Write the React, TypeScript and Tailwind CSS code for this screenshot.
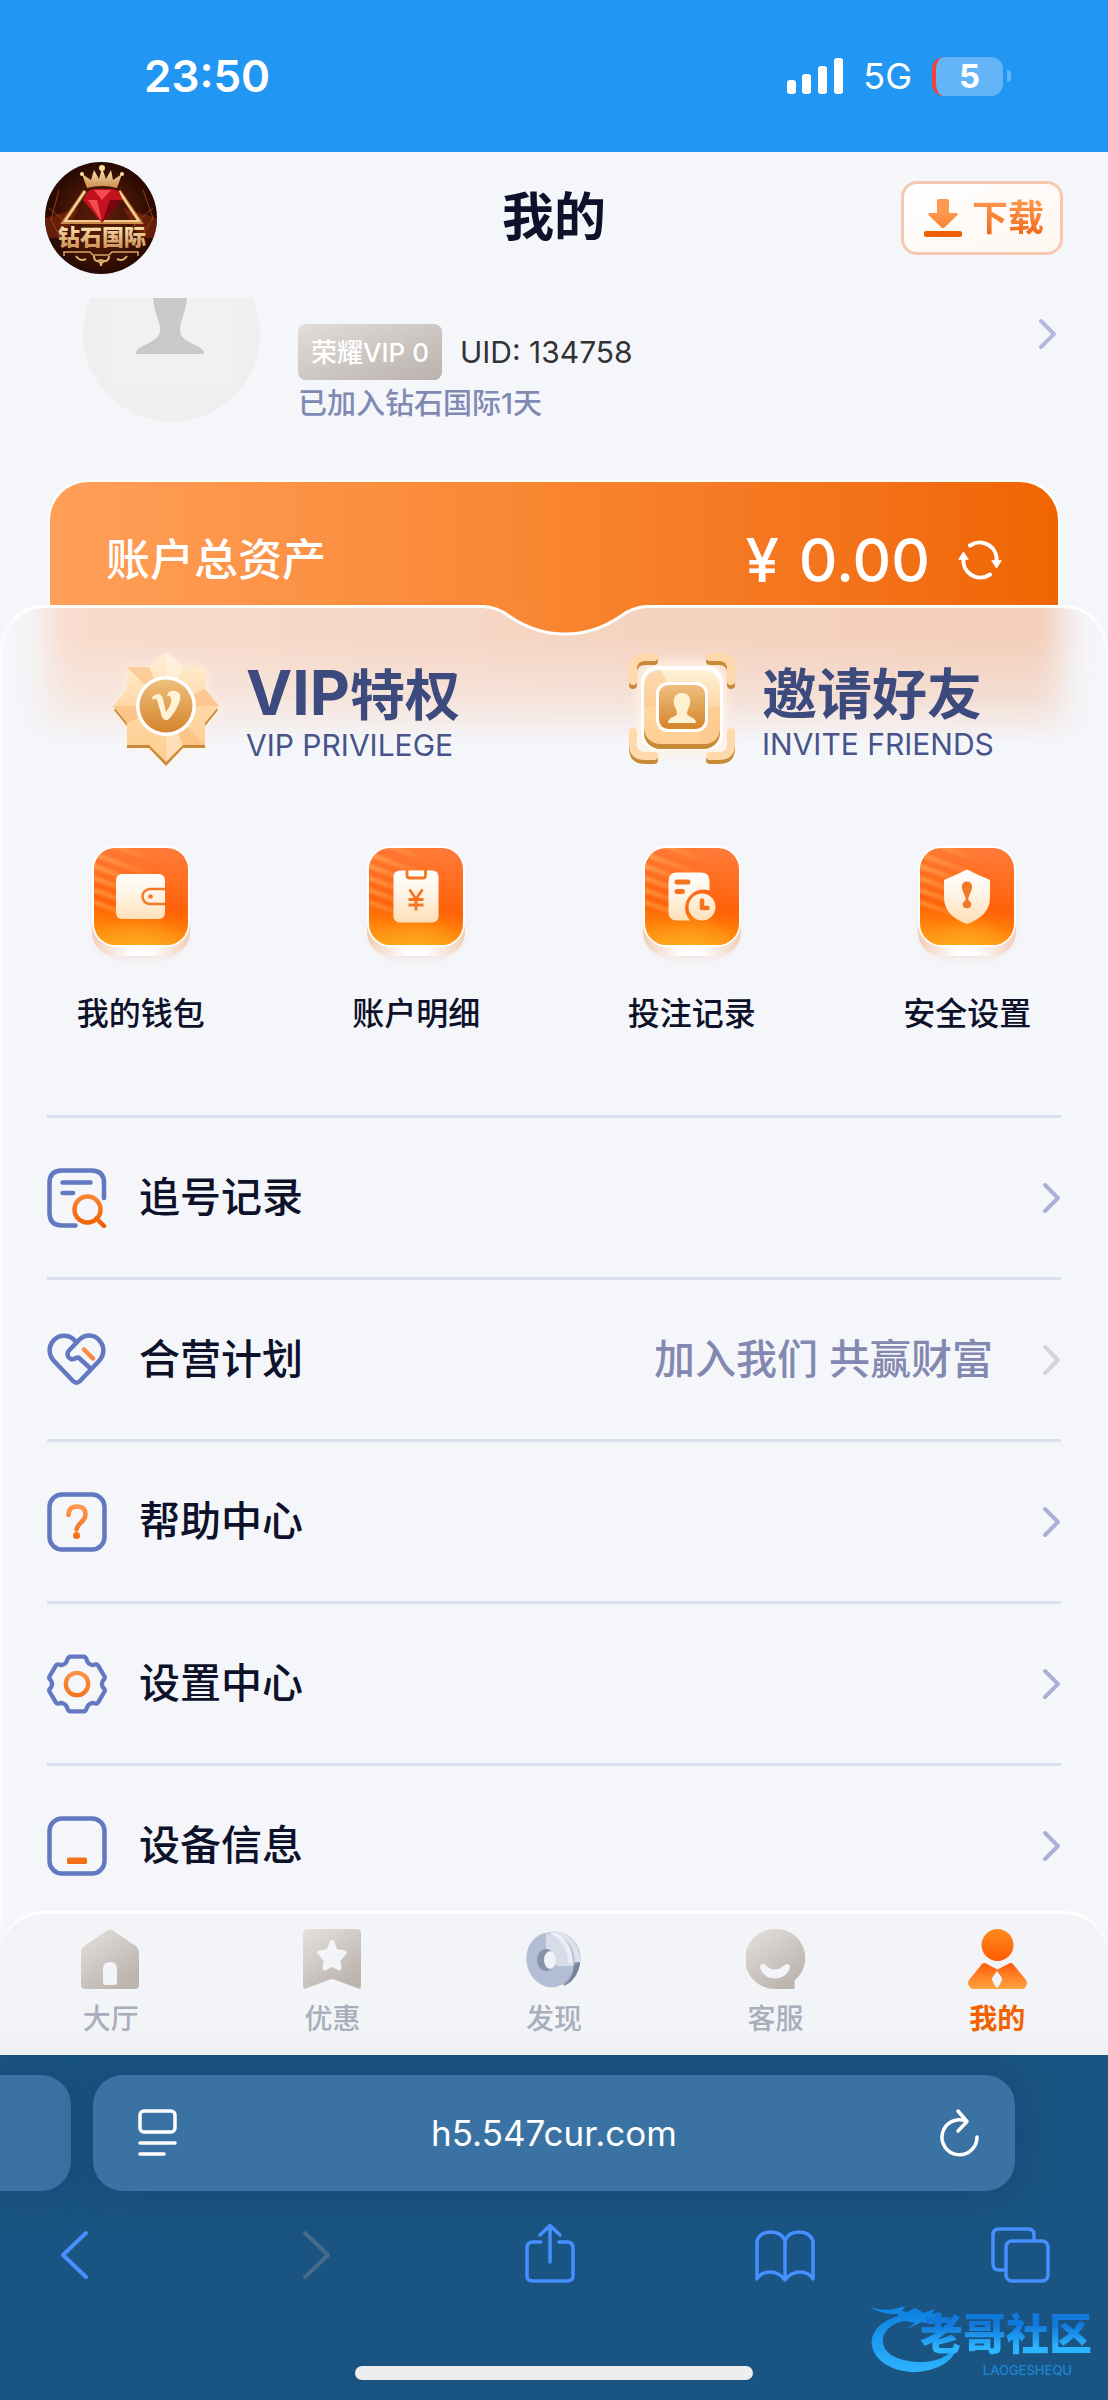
import React from 'react';

interface QuickAction {
    id: string;
    label: string;
    glyph: React.ReactNode;
}

interface MenuItem {
    id: string;
    label: string;
    note?: string;
    icon: React.ReactNode;
}

interface TabItem {
    id: string;
    label: string;
    icon: React.ReactNode;
}

// Gradients shared by all the icons on the page
const SharedGradients: React.FC = () => (
    <svg className="absolute w-0 h-0" aria-hidden="true">
        <defs>
            <linearGradient id="tile" x1="0.6" y1="0" x2="0.5" y2="1">
                <stop offset="0" stopColor="#ff7a38" />
                <stop offset="0.62" stopColor="#ff6208" />
                <stop offset="0.78" stopColor="#ff7a08" />
                <stop offset="1" stopColor="#ff9f18" />
            </linearGradient>
            <radialGradient id="tileGlow" cx="0.5" cy="1" r="0.5" gradientTransform="matrix(1 0 0 0.6 0 0.4)">
                <stop offset="0" stopColor="#ffa91e" />
                <stop offset="1" stopColor="#ff9f18" stopOpacity="0" />
            </radialGradient>
            <linearGradient id="tileShine" gradientUnits="userSpaceOnUse" x1="13" y1="30" x2="75" y2="40">
                <stop offset="0" stopColor="#ffc06a" stopOpacity="0.5" />
                <stop offset="1" stopColor="#ffc06a" stopOpacity="0" />
            </linearGradient>
            <linearGradient id="tileBase" x1="0" y1="0" x2="1" y2="0">
                <stop offset="0" stopColor="#f0cdb8" />
                <stop offset="0.4" stopColor="#fff" />
                <stop offset="0.6" stopColor="#fff" />
                <stop offset="1" stopColor="#f0cdb8" />
            </linearGradient>
            <linearGradient id="cream" gradientUnits="userSpaceOnUse" x1="0" y1="32" x2="0" y2="84">
                <stop offset="0" stopColor="#fff" />
                <stop offset="0.4" stopColor="#fff6ea" />
                <stop offset="1" stopColor="#fddfb6" />
            </linearGradient>
            <linearGradient id="hot" gradientUnits="userSpaceOnUse" x1="0" y1="12" x2="0" y2="58">
                <stop offset="0" stopColor="#ff9a52" />
                <stop offset="1" stopColor="#ee6000" />
            </linearGradient>
            <linearGradient id="stone" x1="0.1" y1="0" x2="0.8" y2="1">
                <stop offset="0" stopColor="#e2dfdb" />
                <stop offset="0.9" stopColor="#bcb5b0" />
            </linearGradient>
            <linearGradient id="head" x1="0" y1="0" x2="0" y2="1">
                <stop offset="0" stopColor="#ff8c1f" />
                <stop offset="1" stopColor="#ff5c00" />
            </linearGradient>
            <linearGradient id="body" x1="0" y1="0" x2="0" y2="1">
                <stop offset="0" stopColor="#ff5c08" />
                <stop offset="1" stopColor="#ffa540" />
            </linearGradient>
            <linearGradient id="gold" x1="0" y1="0" x2="0" y2="1">
                <stop offset="0" stopColor="#fff1d8" />
                <stop offset="0.5" stopColor="#ffd7a4" />
                <stop offset="1" stopColor="#ffce92" />
            </linearGradient>
            <linearGradient id="goldDark" x1="0" y1="0" x2="0" y2="1">
                <stop offset="0" stopColor="#eebf7e" />
                <stop offset="1" stopColor="#d5842a" />
            </linearGradient>
            <linearGradient id="mark" x1="0" y1="0" x2="0" y2="1">
                <stop offset="0" stopColor="#0f7fe0" />
                <stop offset="1" stopColor="#2cb4ff" />
            </linearGradient>
            <filter id="soft" x="-40%" y="-40%" width="180%" height="180%">
                <feGaussianBlur stdDeviation="5" />
            </filter>
            <filter id="haze" x="-20%" y="-20%" width="140%" height="140%">
                <feGaussianBlur stdDeviation="1.2" />
            </filter>
            <clipPath id="tileClip">
                <rect x="13" y="10" width="94" height="97" rx="21" />
            </clipPath>
        </defs>
    </svg>
);

const BrandLogo: React.FC = () => (
    <svg className="w-28 h-28 shrink-0" viewBox="0 0 112 112" role="img" aria-label="钻石国际">
        <defs>
            <radialGradient id="logoBg">
                <stop offset="0" stopColor="#5a1c08" />
                <stop offset="0.6" stopColor="#451405" />
                <stop offset="1" stopColor="#260a03" />
            </radialGradient>
            <linearGradient id="logoGold" x1="0" y1="0" x2="0" y2="1">
                <stop offset="0" stopColor="#ffeab8" />
                <stop offset="1" stopColor="#c98a4c" />
            </linearGradient>
            <clipPath id="logoClip"><circle cx="56" cy="56" r="56" /></clipPath>
        </defs>
        <g clipPath="url(#logoClip)">
            <rect width="112" height="112" fill="url(#logoBg)" />
            <path d="M0 56l34-10-18 30H0zM112 56L78 46l18 30h16z" fill="#7a260b" opacity="0.75" />
            <path d="M14 28l-8 30 14 26M98 28l10 28-16 26M4 46l24 20M108 46L86 66" stroke="#a6491c" strokeWidth="1" fill="none" opacity="0.8" />
            <path d="M40 29L19 60h76L74 29" fill="none" stroke="#c98a4c" strokeWidth="4" />
            <path d="M40 29L20 59h74L74 29" fill="none" stroke="#ffe0a8" strokeWidth="1.5" />
            <path d="M43 29l6-2h18l7 2 3 8-20 24-19-23z" fill="#c3121f" />
            <path d="M49 28l8 10 9-10zM43 38l14 22-5-22z" fill="#ff5a5a" opacity="0.8" />
            <path d="M57 60l8-22h12z" fill="#7a0510" />
            <path d="M42 26l-5-14 9 6 3-10 5 9 3-11 4 11 5-9 2 10 9-6-5 14q-15-4-30 0z" fill="url(#logoGold)" />
            <circle cx="57" cy="6" r="3" fill="#ffdf9c" />
            <circle cx="37" cy="12" r="2" fill="#ffdf9c" />
            <circle cx="77" cy="12" r="2" fill="#ffdf9c" />
            <text x="57" y="83" textAnchor="middle" fontSize="22" fontWeight="900" fill="url(#logoGold)">钻石国际</text>
            <path d="M19 94v-4h26l3 3h16l3-3h26v4" fill="none" stroke="#d9a566" strokeWidth="1.5" />
            <path d="M31 94q4 6 10 3M82 94q-4 6-10 3M49 94q0 7 7 4 8 3 8-4M52 99q4 0 4 5 0-5 5-5" fill="none" stroke="#e0b070" strokeWidth="2" />
        </g>
    </svg>
);

const ChevronRight: React.FC<{ className?: string }> = ({ className = 'text-[#aab0d6]' }) => (
    <svg className={`w-5 h-8 shrink-0 ${className}`} viewBox="0 0 20 32" fill="none" stroke="currentColor" strokeWidth="4" strokeLinecap="round" strokeLinejoin="round">
        <path d="M4 3l13 13L4 29" />
    </svg>
);

const TileIcon: React.FC<{ children: React.ReactNode }> = ({ children }) => (
    <svg className="w-[120px] h-[130px]" viewBox="0 0 120 130">
        <rect x="15" y="24" width="90" height="94" rx="24" fill="#e8b79a" opacity="0.45" filter="url(#soft)" />
        <rect x="11" y="22" width="98" height="96" rx="24" fill="url(#tileBase)" />
        <rect x="11" y="8" width="98" height="101" rx="24" fill="#fff" />
        <rect x="13" y="10" width="94" height="97" rx="21" fill="url(#tile)" />
        <rect x="13" y="10" width="94" height="97" rx="21" fill="url(#tileGlow)" />
        <g clipPath="url(#tileClip)">
            <path d="M13 16l70 26M13 28l70 26M13 40l70 26M13 52l60 22M28 6l60 22M13 64l50 18" stroke="url(#tileShine)" strokeWidth="5" filter="url(#haze)" />
        </g>
        {children}
    </svg>
);

const quickActions: QuickAction[] = [
    {
        id: 'wallet',
        label: '我的钱包',
        glyph: (
            <>
                <rect x="35" y="36" width="49" height="45" rx="6" fill="url(#cream)" />
                <path d="M84 51H69a7.500 7.500 0 000 15h15" fill="none" stroke="#f27a2a" strokeWidth="2.500" />
                <circle cx="69.500" cy="58.500" r="2.300" fill="#f27a2a" />
            </>
        ),
    },
    {
        id: 'detail',
        label: '账户明细',
        glyph: (
            <>
                <rect x="37.500" y="32.500" width="45" height="52" rx="6" fill="url(#cream)" />
                <path d="M51 32v5.500q0 2.500 2.500 2.500h13.500q2.500 0 2.500-2.500V32" fill="none" stroke="#f5741f" strokeWidth="2.800" />
                <path d="M53.500 51.500l6.500 9.500 6.500-9.500M60 61v11.500M52.500 61.500h15M52.500 67h15" fill="none" stroke="#f5741f" strokeWidth="2.800" />
            </>
        ),
    },
    {
        id: 'bets',
        label: '投注记录',
        glyph: (
            <>
                <path d="M45 34.500h24q8.500 0 8.500 8.500v9.500A18.500 18.500 0 0058 82.500H45q-8.500 0-8.500-8.500V43q0-8.500 8.500-8.500z" fill="url(#cream)" />
                <path d="M45 44h11M45 53.500h5.500" stroke="#f5741f" strokeWidth="5" strokeLinecap="round" />
                <circle cx="70" cy="69" r="13.500" fill="url(#cream)" />
                <path d="M70 62.500v7.500h5.500" fill="none" stroke="#f5741f" strokeWidth="4.500" strokeLinecap="round" strokeLinejoin="round" />
            </>
        ),
    },
    {
        id: 'security',
        label: '安全设置',
        glyph: (
            <>
                <path d="M60 31.500q12 6 23 10.500v17q0 19-23 27-23-8-23-27V42q11-4.500 23-10.500z" fill="url(#cream)" />
                <path d="M60 43.500c4 0 5.500 3 5 6.500-1 6-4 7-3.500 12.500 3 1.500 3 4 2.500 5.500-1 3-7 3-8 0-.5-1.500-.5-4 2.500-5.500C59 57 56 56 55 50c-.5-3.500 1-6.500 5-6.500z" fill="#f07a28" />
            </>
        ),
    },
];

const iconBox = 'w-[60px] h-[60px] shrink-0';

const menuItems: MenuItem[] = [
    {
        id: 'chase',
        label: '追号记录',
        icon: (
            <svg className={iconBox} viewBox="0 0 60 60" fill="none" strokeWidth="4.500" strokeLinecap="round">
                <path d="M57 30V15Q57 2.500 44.500 2.500H15Q2.500 2.500 2.500 15v30Q2.500 57.500 15 57.500h13.500M15.500 14.500h28M15.500 25h10.500" stroke="#6278c0" />
                <circle cx="40.500" cy="41.500" r="13" stroke="url(#hot)" />
                <path d="M49.500 50.500l7.500 7.500" stroke="url(#hot)" />
            </svg>
        ),
    },
    {
        id: 'partner',
        label: '合营计划',
        note: '加入我们 共赢财富',
        icon: (
            <svg className={iconBox} viewBox="0 0 60 60" fill="none" strokeWidth="4.500" strokeLinecap="round" strokeLinejoin="round">
                <path d="M29.500 12.500C23 3.500 12 4 6.500 10.500 1 17 1.500 25 7 31l19 20q3.500 3.500 7 0l19-20c5.500-6 6-14 .5-20.500C47 4 38 4 32 10L22 20.500c-3 4-1 7.500 2 8.500 3 1 4.500-1.500 7.500-1.500l12 11" stroke="#6278c0" />
                <path d="M37 19.500l9 9" stroke="url(#hot)" />
            </svg>
        ),
    },
    {
        id: 'help',
        label: '帮助中心',
        icon: (
            <svg className={iconBox} viewBox="0 0 60 60" fill="none" strokeWidth="4.500" strokeLinecap="round">
                <rect x="2.500" y="2.500" width="55" height="55" rx="12.500" stroke="#6278c0" />
                <path d="M21.500 23q0-8.500 8.500-8.500t8.500 8q0 4-4 7.500t-5 7.500" stroke="url(#hot)" />
                <circle cx="29.500" cy="43.500" r="3.500" fill="url(#hot)" />
            </svg>
        ),
    },
    {
        id: 'settings',
        label: '设置中心',
        icon: (
            <svg className={iconBox} viewBox="0 0 59 59" fill="none" strokeWidth="4.200" strokeLinejoin="round">
                <path d="M23 2.500h13q2 0 3 3 1 4.500 6 5.500 4-1.500 5 0l6.500 11q1 2-1 3.500-3 4 0 8 2 1.500 1 3.500L50 48q-1 1.500-5 0-5 1-6 5.500-1 3-3 3H23q-2 0-3-3-1-4.500-6-5.500-4 1.500-5 0L2.500 37q-1-2 1-3.500 3-4 0-8-2-1.500-1-3.500L9 11q1-1.500 5 0 5-1 6-5.500 1-3 3-3z" stroke="#6278c0" />
                <circle cx="29.500" cy="29.500" r="11" stroke="url(#hot)" />
            </svg>
        ),
    },
    {
        id: 'device',
        label: '设备信息',
        icon: (
            <svg className={iconBox} viewBox="0 0 60 60" fill="none">
                <rect x="2.500" y="2.500" width="55" height="55" rx="12.500" stroke="#6278c0" strokeWidth="4.500" />
                <rect x="20" y="41.500" width="20" height="6.500" rx="1.500" fill="url(#hot)" />
            </svg>
        ),
    },
];

const tabs: TabItem[] = [
    {
        id: 'lobby',
        label: '大厅',
        icon: (
            <path fillRule="evenodd" d="M26 1.500q3-2 6 0L54 16.500q4 3 4 7V56q0 4-4 4H4q-4 0-4-4V23.500q0-4 4-7zM29 33q-7 0-7 7v13q0 3 3 3h8q3 0 3-3V40q0-7-7-7z" fill="url(#stone)" />
        ),
    },
    {
        id: 'promo',
        label: '优惠',
        icon: (
            <path fillRule="evenodd" d="M4 0h50q4 0 4 4v53q0 4-4 2L31 50.500q-2-1-4 0L4 59q-4 2-4-2V4q0-4 4-4zM29 11q-2 0-2.500 2L24 20l-8 1.500q-3 1.500-1 4l5.500 6-1 8q.5 3 3.500 1.500l6-3 6 3q3 1.500 3.500-1.500l-1-8 5.500-6q2-2.500-1-4L34 20l-2.500-7q-.5-2-2.500-2z" fill="url(#stone)" />
        ),
    },
    {
        id: 'discover',
        label: '发现',
        icon: (
            <>
                <path d="M22 4Q36 0 46 8q12 10 10 27-4 17-16 22z" fill="#8b9ab2" />
                <path d="M22 4Q36 0 46 8q11 10 10 25L34 34z" fill="#dfe2ed" />
                <ellipse cx="26.500" cy="31" rx="24" ry="27.500" transform="rotate(-12 26.500 31)" fill="#b3bdd3" />
                <path d="M22 4q24 2 27 33H33L22 22z" fill="#d8dbe8" />
                <path d="M33 4q16 10 16 31l-5-1Q44 14 26 4z" fill="#ecedf5" />
                <path d="M50 36l6-2q-2 15-14 22 7-8 8-20z" fill="#74849b" />
                <ellipse cx="22" cy="31" rx="9" ry="11" fill="#8594aa" />
                <ellipse cx="26" cy="31" rx="6" ry="9" fill="#f2f3f8" />
            </>
        ),
    },
    {
        id: 'service',
        label: '客服',
        icon: (
            <path fillRule="evenodd" d="M29 0a29 29 0 0119.500 51.500V60H29A30 30 0 0129 0zM19.500 36c-3-2.500-6.500 0-5 4C17 46 22 49.500 29 49.500S41 46 43.500 40c1.500-4-2-6.500-5-4-6 6-13 6-19 0z" fill="url(#stone)" />
        ),
    },
    {
        id: 'mine',
        label: '我的',
        icon: (
            <>
                <circle cx="29.500" cy="16" r="16" fill="url(#head)" />
                <path fillRule="evenodd" d="M14 35q2-2 5 0l10.500 5.500L40 35q3-2 5 0l13 16q1.500 2 .5 5l-1 2q-.5 2-3 2h-50q-2 0-3-2l-1-2q-1-3 .5-5zM29 42l-5 7q0 4 4 9 1 1 2 0 4-5 4-9z" fill="url(#body)" />
            </>
        ),
    },
];

const StatusBar: React.FC = () => (
    <div className="bg-[#2196f3] text-white pl-36 pr-[97px] py-12 flex items-center justify-between">
        <span className="text-[44px] leading-14 font-semibold">23:50</span>
        <div className="flex items-center">
            <svg className="w-14 h-9 mr-5" viewBox="0 0 56 36" fill="currentColor">
                <rect x="0" y="22" width="9" height="14" rx="3" />
                <rect x="15" y="16" width="9" height="20" rx="3" />
                <rect x="31" y="8" width="9" height="28" rx="3" />
                <rect x="47" y="0" width="9" height="36" rx="3" />
            </svg>
            <span className="text-4xl mr-5">5G</span>
            <span className="w-[71px] h-[39px] rounded-xl bg-[#64b5f7] border-l-4 border-[#f44336] text-[33px] font-bold leading-none flex items-center justify-center">5</span>
            <span className="w-1 h-3 ml-1 rounded-r-full bg-[#64b5f7]" />
        </div>
    </div>
);

const PageHeader: React.FC = () => (
    <header className="px-[45px] pt-2.5 pb-6 grid grid-cols-[1fr_auto_1fr] items-center">
        <BrandLogo />
        <h1 className="text-[52px] leading-16 font-bold text-[#0d1129]">我的</h1>
        <button className="justify-self-end h-[74px] pl-5 pr-4 rounded-2xl border-3 border-[#f6c8b0] bg-linear-to-br from-white to-[#fdf6f0] flex items-center gap-2.5 text-4xl font-bold">
            <svg className="w-[38px] h-[38px]" viewBox="0 0 38 38">
                <path d="M15 0h8q2 0 2 2v12h7q3 0 1 2.500L20.500 28.500q-1.500 1.500-3 0L5 16.500Q3 14 6 14h7V2q0-2 2-2z" fill="url(#hot)" />
                <rect x="0" y="32" width="38" height="6" rx="2" fill="#ee6000" />
            </svg>
            <span className="bg-linear-to-b from-[#ff9a52] to-[#ee6508] bg-clip-text text-transparent">下载</span>
        </button>
    </header>
);

const Profile: React.FC = () => (
    <section className="overflow-hidden pl-[83px] pr-[51px] pb-[58px] flex items-start">
        <svg className="w-[177px] h-[177px] -mt-[53px] shrink-0" viewBox="0 0 177 177">
            <circle cx="88.500" cy="88.500" r="88.500" fill="#efefef" />
            <rect x="28" y="16" width="120" height="128" fill="#f1f1f1" />
            <path d="M87 20c14 0 19 14 17 32-1 14-5 20-7 30-1 8 3 12 13 17 8 4 11 5 11 10H53c0-5 3-6 11-10 10-5 14-9 13-17-2-10-6-16-7-30-2-18 3-32 17-32z" fill="#c9c9c9" />
        </svg>
        <div className="flex-1 ml-[38px] pt-[26px]">
            <div className="flex items-center gap-4.5">
                <span className="h-14 px-[13px] rounded-lg bg-linear-to-br from-[#e2dedb] to-[#b9b1ac] text-white text-[26px] font-medium flex items-center">荣耀VIP 0</span>
                <span className="text-[30px] text-[#333]">UID: 134758</span>
            </div>
            <p className="mt-1.5 text-[29px] leading-9 font-medium text-[#8089b3]">已加入钻石国际1天</p>
        </div>
        <button className="mt-5" aria-label="个人资料">
            <ChevronRight className="text-[#b4b8de]" />
        </button>
    </section>
);

const BalanceCard: React.FC = () => (
    <section className="mx-12 pt-12 pb-[15px] pl-14 pr-14 rounded-t-[40px] border-2 border-b-0 border-white bg-linear-to-r from-[#ff9f58] via-[#f9852f] to-[#ef6500] text-white flex items-center justify-between">
        <h2 className="text-[44px] leading-15 font-medium">账户总资产</h2>
        <div className="flex items-center">
            <p className="text-[60px] leading-15 font-medium flex gap-5">
                <span>¥</span>
                <span>0.00</span>
            </p>
            <button className="ml-7" aria-label="刷新余额">
                <svg className="w-11 h-10" viewBox="0 0 44 40" fill="none" stroke="currentColor" strokeWidth="4" strokeLinecap="round">
                    <path d="M12 5.500A17 17 0 0138.500 22M32 34.500A17 17 0 015.500 18" />
                    <path d="M1 19l4.500-7 4.500 7zM34 21l4.500 7 4.500-7z" fill="currentColor" strokeWidth="1" />
                </svg>
            </button>
        </div>
    </section>
);

const VipBadge: React.FC = () => (
    <svg className="w-[120px] h-[120px] shrink-0" viewBox="0 0 120 120">
        <path d="M60 6l17 14h22v22l16 18-16 18v22H77l-17 18-17-18H21V78L5 60l16-18V20h22z" fill="#fff3e4" opacity="0.9" filter="url(#soft)" />
        <path d="M60 10l16 14h23v22l13 16-13 16v22H77l-17 18-17-18H21V78L8 62l13-16V24h23z" fill="#c98a38" />
        <path d="M60 4l17 15h22v22l14 17-14 17v22H77l-17 17-17-17H21V75L7 58l14-17V19h22z" fill="url(#gold)" />
        <path d="M21 19h22l17 39zM99 41l14 17H60zM99 97H77L60 58zM21 75L7 58h53z" fill="#fbb878" opacity="0.55" />
        <path d="M60 4l17 15-17 39zM60 58l17 39-17 17z" fill="#fff" opacity="0.3" />
        <circle cx="60" cy="58" r="30" fill="#fff" />
        <circle cx="60" cy="58" r="26.500" fill="url(#goldDark)" />
        <path d="M46 49q8-7 11 2l3 13q7-10 5-14-1-3-4-2 1-6 8-5 7 1 5 9-2 8-10 18-5 5-8-1l-5-17q-1-3-4 0z" fill="#fff3d6" />
    </svg>
);

const InviteBadge: React.FC = () => (
    <svg className="w-[120px] h-[120px] shrink-0" viewBox="0 0 120 120">
        <rect x="14" y="12" width="92" height="98" rx="20" fill="#fff3e4" opacity="0.8" filter="url(#soft)" />
        <g fill="none" strokeLinecap="round">
            <path d="M11 37V25q0-12 12-12h9M88 13h9q12 0 12 12v12M11 88v12q0 12 12 12h9M88 112h9q12 0 12-12V88" stroke="#c98a38" strokeWidth="8" />
            <path d="M11 33V21Q11 9 23 9h9M88 9h9q12 0 12 12v12M11 84v12q0 12 12 12h9M88 108h9q12 0 12-12V84" stroke="#ffd9ac" strokeWidth="8" />
        </g>
        <rect x="19" y="18" width="82" height="84" rx="16" fill="#fff" />
        <rect x="22" y="28" width="76" height="73" rx="16" fill="#c98a38" />
        <rect x="22" y="22" width="76" height="74" rx="16" fill="url(#gold)" />
        <path d="M22 38q0-16 16-16l22 37H22zM98 59v21q0 16-16 16L60 59z" fill="#fbc48a" opacity="0.5" />
        <rect x="34" y="34" width="52" height="50" rx="12" fill="#fff" />
        <rect x="37" y="37" width="46" height="44" rx="9" fill="url(#goldDark)" />
        <path d="M60 45c7 0 9 5 8 11-1 4-3 6-3 10 1 3 9 3 9 9H46c0-6 8-6 9-9 0-4-2-6-3-10-1-6 1-11 8-11z" fill="#fff0cf" />
    </svg>
);

interface FeatureLinkProps {
    title: React.ReactNode;
    subtitle: string;
    icon: React.ReactNode;
}

const FeatureLink: React.FC<FeatureLinkProps> = ({ title, subtitle, icon }) => (
    <a href="#" className="flex items-center gap-5 text-[#3c4a7e]">
        {icon}
        <div className="pt-2 whitespace-nowrap">
            <p className="text-[55px] leading-15 font-bold">{title}</p>
            <p className="mt-1 text-[30px] leading-8 text-[#47548a]">{subtitle}</p>
        </div>
    </a>
);

const MainPanel: React.FC = () => (
    <main className="relative rounded-t-[44px] border-3 border-b-0 border-x-white/60 border-t-white bg-[#f5f6fa]">
        {/* Card colour showing through the frosted top edge */}
        <div className="absolute inset-x-0 top-0 h-40 overflow-hidden rounded-t-[41px] [mask-image:linear-gradient(to_bottom,black_30px,rgba(0,0,0,0.6)_90px,transparent_135px)]">
            <div className="absolute inset-x-11 -top-10 h-60 bg-linear-to-r from-[#f8dccd] to-[#f3cdb8] blur-lg" />
        </div>
        <svg className="absolute -top-1.5 left-[51%] -translate-x-1/2 w-[180px] h-9" viewBox="0 0 180 36">
            <defs>
                <linearGradient id="notch" x1="0" y1="0" x2="1" y2="0">
                    <stop offset="0" stopColor="#fa8a38" />
                    <stop offset="1" stopColor="#f77f27" />
                </linearGradient>
            </defs>
            <path d="M10 0v4.500Q22 6 34 14q26 18 56 18t56-18q12-8 24-9.500V0z" fill="url(#notch)" />
            <path d="M0 4.500h8Q22 5 34 14q26 18 56 18t56-18q12-9 26-9.500h8" fill="none" stroke="#fff" strokeWidth="3" />
        </svg>

        <div className="relative pt-10 pl-[103px] grid grid-cols-[172fr_161fr]">
            <FeatureLink title={<><span className="text-[62px]">VIP</span>特权</>} subtitle="VIP PRIVILEGE" icon={<VipBadge />} />
            <FeatureLink title="邀请好友" subtitle="INVITE FRIENDS" icon={<InviteBadge />} />
        </div>

        <div className="relative mt-[70px] grid grid-cols-4">
            {quickActions.map(({ id, label, glyph }) => (
                <button key={id} className="flex flex-col items-center gap-[26px]">
                    <TileIcon>{glyph}</TileIcon>
                    <span className="text-[32px] leading-10 font-medium text-[#0d1129]">{label}</span>
                </button>
            ))}
        </div>

        <nav className="mt-[81px] mx-11">
            {menuItems.map(({ id, label, note, icon }) => (
                <a key={id} href="#" className="h-[162px] border-t-3 border-[#dae0ee] flex items-center">
                    {icon}
                    <span className="ml-8 text-[41px] font-medium text-[#0d1129]">{label}</span>
                    {note && <span className="ml-auto text-[41px] font-medium text-[#8388b0]">{note}</span>}
                    <ChevronRight className={note ? 'ml-12 text-[#d3d5de]' : 'ml-auto text-[#aab0d6]'} />
                </a>
            ))}
        </nav>
    </main>
);

const TabBar: React.FC<{ activeTab: string }> = ({ activeTab }) => (
    <nav className="relative -mt-3.5 pt-[15px] pb-[18px] rounded-t-[44px] border-t-3 border-white bg-linear-to-b from-[#f3f4f8] from-80% to-[#eef0f4] grid grid-cols-5">
        {tabs.map(({ id, label, icon }) => (
            <a key={id} href="#" className="flex flex-col items-center gap-3">
                <svg className="w-[59px] h-[60px]" viewBox="0 0 59 60">{icon}</svg>
                <span className={id === activeTab ? 'text-[28px] leading-9 font-bold text-[#f26100]' : 'text-[28px] leading-9 font-medium text-[#a9aebb]'}>{label}</span>
            </a>
        ))}
    </nav>
);

const toolIcon = 'w-[60px] h-[60px]';

const BrowserBar: React.FC = () => (
    <footer className="relative bg-[#1a5482] pt-5 pb-5 overflow-hidden">
        <div className="flex gap-[22px]">
            <div className="w-[71px] h-[116px] rounded-r-[30px] bg-[#3a73a3] shadow-[0_0_40px_#0f3f6a80]" />
            <div className="flex-1 mr-[93px] h-[116px] pl-9 pr-7 rounded-[30px] bg-[#3a73a3] shadow-[0_0_40px_#0f3f6a80] text-white flex items-center">
                <button aria-label="页面菜单">
                    <svg className="w-14 h-14" viewBox="0 0 56 56" fill="none" stroke="currentColor" strokeWidth="3.500" strokeLinecap="round">
                        <rect x="11" y="6" width="35" height="21" rx="4" />
                        <path d="M11 38h35M11 49h24" />
                    </svg>
                </button>
                <input className="flex-1 min-w-0 mr-2 bg-transparent text-center text-[35px] outline-none" aria-label="网址" defaultValue="h5.547cur.com" />
                <button aria-label="重新加载">
                    <svg className="w-14 h-14" viewBox="0 0 56 56" fill="none" stroke="currentColor" strokeWidth="3.500" strokeLinecap="round" strokeLinejoin="round">
                        <path d="M46 32a17.500 17.500 0 11-11-16" />
                        <path d="M27 6l9 10.500L27 26" />
                    </svg>
                </button>
            </div>
        </div>

        <div className="mt-8 pl-[50px] pr-[58px] flex justify-between text-[#468fff]">
            <button aria-label="后退">
                <svg className={toolIcon} viewBox="0 0 60 60" fill="none" stroke="currentColor" strokeWidth="4" strokeLinecap="round" strokeLinejoin="round">
                    <path d="M36 10L13 32l23 22" />
                </svg>
            </button>
            <button aria-label="前进" className="text-[#476c8b]" disabled>
                <svg className={toolIcon} viewBox="0 0 60 60" fill="none" stroke="currentColor" strokeWidth="4" strokeLinecap="round" strokeLinejoin="round">
                    <path d="M20 10l23 22-23 22" />
                </svg>
            </button>
            <button aria-label="分享">
                <svg className={toolIcon} viewBox="0 0 60 60" fill="none" stroke="currentColor" strokeWidth="3.500" strokeLinecap="round" strokeLinejoin="round">
                    <path d="M21 19h-8q-6 0-6 6v28q0 5 6 5h34q6 0 6-5V25q0-6-6-6h-8M30 39V3M20 12L30 2.500 40 12" />
                </svg>
            </button>
            <button aria-label="书签">
                <svg className={toolIcon} viewBox="0 0 60 60" fill="none" stroke="currentColor" strokeWidth="3.500" strokeLinejoin="round">
                    <path d="M30 18Q27 9 16 9T2 18v38q4-7 13-7t15 8q6-8 15-8t13 7V18Q55 9 44 9T30 18v39" />
                </svg>
            </button>
            <button aria-label="标签页">
                <svg className={toolIcon} viewBox="0 0 60 60" fill="none" stroke="currentColor" strokeWidth="3.500" strokeLinejoin="round">
                    <path d="M16 47h-7q-6 0-6-6V12q0-6 6-6h29q6 0 6 6v6" />
                    <rect x="16" y="18" width="42" height="40" rx="6" />
                </svg>
            </button>
        </div>

        <div className="mt-[83px] mx-auto w-[398px] h-3.5 rounded-full bg-[#eee]" />

        {/* Community stamp over the toolbar */}
        <div className="absolute right-4 bottom-6 flex items-end">
            <svg className="w-[90px] h-[74px] -mr-10" viewBox="0 0 90 74">
                <path d="M28 14C8 20 0 32 2 44c3 16 22 26 43 26 22-1 38-10 43-26-10 11-24 17-40 16C30 59 14 53 13 40c-1-11 9-19 22-21l10 2-8 6 15-7 8 2 10-1 2-5-8 1 7-6-9 1 3-5-11 4-9-5-8 4-9-2z" fill="url(#mark)" />
                <path d="M0 5q12 4 24 2l12-3-7 8Q12 13 0 5z" fill="#1188e6" />
            </svg>
            <div className="relative flex flex-col items-end">
                <span className="text-[43px] leading-11 font-black bg-linear-to-b from-[#1279dc] from-30% to-[#2cb4ff] to-80% bg-clip-text text-transparent">老哥社区</span>
                <span className="mt-2 mr-5 text-[13px] leading-3 font-medium text-[#1c86d4]">LAOGESHEQU</span>
            </div>
        </div>
    </footer>
);

const App: React.FC = () => {
    return (
        <div className="relative bg-[#f5f6fa] font-['Inter','Noto_Sans_CJK_SC',sans-serif]">
            <SharedGradients />
            <StatusBar />
            <PageHeader />
            <Profile />
            <BalanceCard />
            <MainPanel />
            <TabBar activeTab="mine" />
            <BrowserBar />
        </div>
    );
};

export default App;
